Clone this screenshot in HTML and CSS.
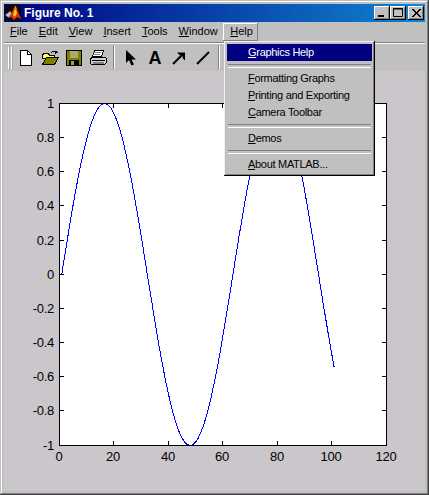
FILE: index.html
```html
<!DOCTYPE html>
<html lang="en">
<head>
<meta charset="utf-8">
<title>Figure No. 1</title>
<link rel="stylesheet" href="styles.css">
</head>
<body>
<div class="window">
  <header class="titlebar">
    <svg class="app-icon" viewBox="0 0 16 16" width="16" height="16">
      <rect width="16" height="16" fill="#0b0b0b"/>
      <polygon points="0,10 5,6 8,9 4,13" fill="#7f8fa0"/>
      <polygon points="1,10 5,7 6,9 3,12" fill="#c8c8c8"/>
      <polygon points="5,11 10,1 12,4 16,14 12,12 9,15" fill="#e03010"/>
      <polygon points="8,10 10,3 12,8 10,12" fill="#ffd020"/>
      <polygon points="10,1 11,1 12,6 10,5" fill="#ff8010"/>
    </svg>
    <span class="title-text">Figure No. 1</span>
    <div class="caption-buttons">
      <button class="cap" aria-label="Minimize"><svg viewBox="0 0 16 14" width="16" height="14"><rect x="4" y="9" width="6" height="2" fill="#000"/></svg></button>
      <button class="cap" aria-label="Maximize"><svg viewBox="0 0 16 14" width="16" height="14"><path d="M3.5 2.5h9v8h-9z M3 3h10" fill="none" stroke="#000"/></svg></button>
      <button class="cap cap-close" aria-label="Close"><svg viewBox="0 0 16 14" width="16" height="14"><path d="M4 3l8 8M5 3l8 8M12 3l-8 8M13 3l-8 8" stroke="#000" fill="none"/></svg></button>
    </div>
  </header>

  <nav class="menubar">
    <span class="menu-item"><u>F</u>ile</span>
    <span class="menu-item"><u>E</u>dit</span>
    <span class="menu-item"><u>V</u>iew</span>
    <span class="menu-item"><u>I</u>nsert</span>
    <span class="menu-item"><u>T</u>ools</span>
    <span class="menu-item"><u>W</u>indow</span>
    <span class="menu-item menu-open"><u>H</u>elp</span>
  </nav>

  <div class="toolbar">
    <span class="handle"></span>
    <span class="tool"><svg viewBox="0 0 16 16" width="16" height="16" shape-rendering="crispEdges">
      <path d="M2.5 .5h7l4 4v11h-11z" fill="#fff" stroke="#000"/><path d="M9.5 .5v4h4" fill="none" stroke="#000"/></svg></span>
    <span class="tool"><svg viewBox="0 0 18 16" width="18" height="16" shape-rendering="crispEdges">
      <path d="M1.5 5.5l1-2h5l1 2h5v3h-12z" fill="#ffff66" stroke="#000"/>
      <path d="M1.5 14.5l4-7h12l-4 7z" fill="#808000" stroke="#000"/>
      <path d="M9.5 3.5c1-2 4-3 6-1.5" fill="none" stroke="#000"/><path d="M14 .5l3 2-3 1.500z" fill="#000"/></svg></span>
    <span class="tool"><svg viewBox="0 0 16 16" width="16" height="16" shape-rendering="crispEdges">
      <rect x=".5" y=".5" width="15" height="15" fill="#808000" stroke="#000"/>
      <rect x="4" y="1" width="8" height="7" fill="#a8a878"/>
      <rect x="3" y="10" width="10" height="5" fill="#000"/><rect x="5" y="11" width="3" height="4" fill="#a0a060"/></svg></span>
    <span class="tool"><svg viewBox="0 0 17 16" width="17" height="16" shape-rendering="crispEdges">
      <path d="M4.500 .5h9l-2 6h-9z" fill="#fff" stroke="#000"/>
      <path d="M3 2.500h8M3 4.500h7" stroke="#808080"/>
      <path d="M1.500 7.500h14l1 1v4l-2 2h-13l-1-1v-4z" fill="#d0d0d0" stroke="#000"/>
      <path d="M2 10.500h13" stroke="#000"/><rect x="3" y="12" width="11" height="2" fill="#808080"/><rect x="13" y="8" width="2" height="1" fill="#ffff00"/></svg></span>
    <span class="sep"></span>
    <span class="tool"><svg viewBox="0 0 12 16" width="12" height="16">
      <path d="M1 0v13l3-3 2.500 5.500 2.500-1-2.500-5h4.500z" fill="#000"/></svg></span>
    <span class="tool tool-letter">A</span>
    <span class="tool"><svg viewBox="0 0 14 14" width="14" height="14">
      <path d="M1 13L11 3" stroke="#000" stroke-width="2" fill="none"/><path d="M5 1.500h8v8l-2.500-2.500V4h-3z" fill="#000"/></svg></span>
    <span class="tool"><svg viewBox="0 0 14 14" width="14" height="14">
      <path d="M1 13L13 1" stroke="#000" stroke-width="2" fill="none"/></svg></span>
    <span class="sep"></span>
  </div>

  <main class="figure">
    <svg class="plot" width="421" height="419" viewBox="4 72 421 419">
      <rect x="59.500" y="104.500" width="327" height="342" fill="#fff"/>
      <polyline id="curve" class="curve" points=""/>
      <g class="axes">
        <rect x="59.500" y="104.500" width="327" height="342" fill="none"/>
        <path d="M113.500 446v-4M168.500 446v-4M222.500 446v-4M277.500 446v-4M331.500 446v-4
                 M113.500 105v4M168.500 105v4M222.500 105v4M277.500 105v4M331.500 105v4
                 M60 138.500h4M60 172.500h4M60 206.500h4M60 241.500h4M60 275.500h4M60 309.500h4M60 343.500h4M60 377.500h4M60 411.500h4
                 M386 138.500h-4M386 172.500h-4M386 206.500h-4M386 241.500h-4M386 275.500h-4M386 309.500h-4M386 343.500h-4M386 377.500h-4M386 411.500h-4"/>
      </g>
      <g class="ylabels">
        <text x="54" y="109">1</text>
        <text x="54" y="143">0.8</text>
        <text x="54" y="177">0.6</text>
        <text x="54" y="211">0.4</text>
        <text x="54" y="246">0.2</text>
        <text x="54" y="280">0</text>
        <text x="54" y="314">-0.2</text>
        <text x="54" y="348">-0.4</text>
        <text x="54" y="382">-0.6</text>
        <text x="54" y="416">-0.8</text>
        <text x="54" y="451">-1</text>
      </g>
      <g class="xlabels">
        <text x="59" y="462">0</text>
        <text x="113" y="462">20</text>
        <text x="168" y="462">40</text>
        <text x="222" y="462">60</text>
        <text x="277" y="462">80</text>
        <text x="331" y="462">100</text>
        <text x="386" y="462">120</text>
      </g>
    </svg>
  </main>

  <div class="dropdown">
    <div class="drop-row drop-active"><u>G</u>raphics Help</div>
    <div class="drop-sep"></div>
    <div class="drop-row"><u>F</u>ormatting Graphs</div>
    <div class="drop-row"><u>P</u>rinting and Exporting</div>
    <div class="drop-row"><u>C</u>amera Toolbar</div>
    <div class="drop-sep"></div>
    <div class="drop-row"><u>D</u>emos</div>
    <div class="drop-sep"></div>
    <div class="drop-row"><u>A</u>bout MATLAB...</div>
  </div>
</div>
<script src="plot.js"></script>
</body>
</html>
```
FILE: styles.css
```css
* { box-sizing: border-box; }
html, body { margin: 0; padding: 0; }
body {
  width: 429px;
  height: 495px;
  overflow: hidden;
  font-family: "Liberation Sans", Arial, sans-serif;
  font-size: 11px;
  color: #000;
}
.window {
  position: relative;
  width: 429px;
  height: 495px;
  padding: 4px;
  display: flex;
  flex-direction: column;
  background: #c0c0c0;
  box-shadow: inset -1px -1px #404040, inset 1px 1px #c0c0c0, inset -2px -2px #808080, inset 2px 2px #fff;
}
.titlebar {
  height: 18px;
  flex: none;
  display: flex;
  align-items: center;
  padding-left: 1px;
  background: linear-gradient(90deg, #000080, #1084d0);
  color: #fff;
}
.app-icon { flex: none; }
.title-text { margin-left: 3px; font-size: 12px; font-weight: 700; }
.caption-buttons { margin-left: auto; margin-right: 1px; display: flex; }
.cap {
  width: 16px;
  height: 14px;
  padding: 0;
  border: 0;
  background: #c0c0c0;
  box-shadow: inset -1px -1px #000, inset 1px 1px #fff, inset -2px -2px #808080;
  display: block;
}
.cap svg { display: block; }
.cap-close { margin-left: 2px; }
.menubar {
  height: 21px;
  flex: none;
  display: flex;
  align-items: center;
  padding-left: 0.5px;
  border-bottom: 1px solid #808080;
  box-shadow: 0 1px #fff;
}
.menu-item {
  padding: 2px 5.5px 3px;
  line-height: 13px;
}
.menu-open {
  padding: 2px 5px 3px 7px;
  box-shadow: inset -1px -1px #808080, inset 1px 1px #fff;
}
.toolbar {
  height: 28px;
  flex: none;
  display: flex;
  align-items: center;
  padding: 1px 0 0 4px;
}
.handle {
  width: 5px;
  height: 22px;
  margin-right: 1px;
  background: linear-gradient(90deg, #fff 0 1px, #a8a8a8 1px 2px, #c0c0c0 2px 3px, #fff 3px 4px, #a8a8a8 4px 5px);
}
.tool {
  width: 24px;
  height: 22px;
  display: flex;
  align-items: center;
  justify-content: center;
}
.tool-letter { font-size: 18px; font-weight: 700; line-height: 22px; }
.sep {
  width: 2px;
  height: 23px;
  margin: 0 4px 0 3px;
  background: linear-gradient(90deg, #808080 0 1px, #fff 1px 2px);
}
.figure {
  flex: 1;
  min-height: 0;
  background: repeating-conic-gradient(#cecace 0 25%, #c6c2c8 0 50%) 0 0 / 2px 2px;
}
.plot { display: block; }
.curve { fill: none; stroke: #0000ff; stroke-width: 1; shape-rendering: crispEdges; }
.axes { fill: none; stroke: #000; stroke-width: 1; shape-rendering: crispEdges; }
.plot text { font-family: "Liberation Sans", Arial, sans-serif; font-size: 13px; fill: #000; letter-spacing: -0.3px; }
.ylabels { text-anchor: end; }
.xlabels { text-anchor: middle; }
.dropdown {
  position: absolute;
  left: 224px;
  top: 41px;
  width: 151px;
  height: 135px;
  padding: 3px;
  background: #c0c0c0;
  box-shadow: inset -1px -1px #000, inset 1px 1px #f0f0f0, inset -2px -2px #808080;
  letter-spacing: -0.3px;
}
.drop-row {
  height: 17px;
  line-height: 17px;
  padding-left: 21px;
}
.drop-active { background: #000080; color: #fff; }
.drop-sep {
  height: 9px;
  padding: 3px 1px 0;
}
.drop-sep::before {
  content: "";
  display: block;
  height: 2px;
  border-top: 1px solid #808080;
  border-bottom: 1px solid #fff;
}
```
FILE: plot.js
```js
var pts = [];
for (var i = 0; i <= 100; i++) {
  var px = 59 + (i + 1) * 327 / 120;
  var py = 275.5 - 171 * Math.sin(i / 10);
  pts.push(px.toFixed(1) + "," + py.toFixed(1));
}
document.getElementById("curve").setAttribute("points", pts.join(" "));
```
